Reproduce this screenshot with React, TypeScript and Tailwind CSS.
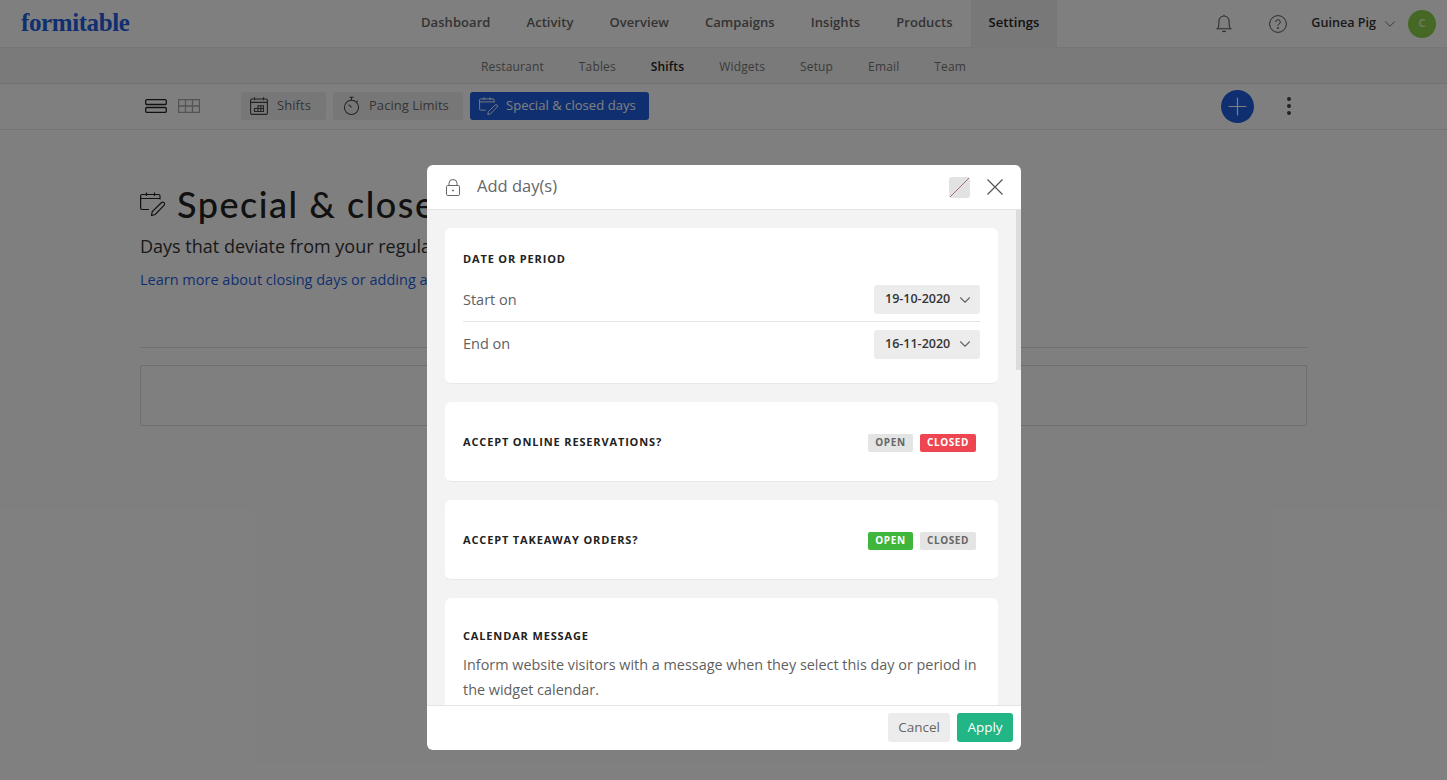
import React from 'react';
import { ChevronDown, Plus } from 'lucide-react';

const sans = { fontFamily: '"Open Sans", sans-serif' };

const mainNav = ['Dashboard', 'Activity', 'Overview', 'Campaigns', 'Insights', 'Products', 'Settings'];
const subNav = ['Restaurant', 'Tables', 'Shifts', 'Widgets', 'Setup', 'Email', 'Team'];

const CalendarPen = ({ className = '' }: { className?: string }) => (
  <svg viewBox="0 0 25 24" fill="none" stroke="currentColor" strokeWidth="1.2" className={className}>
    <path d="M9 17.500H2A1.500 1.500 0 0 1 0.600 16V4A1.500 1.500 0 0 1 2 2.500H18.500A1.500 1.500 0 0 1 20 4V7.500" />
    <path d="M0.600 6.500H20M6.500 0.500V4M14.500 0.500V4" />
    <path d="M11.500 23.500L12.300 19.500L21.300 10.700A1.900 1.900 0 0 1 24 13.400L15.200 22.500Z" />
  </svg>
);

const CalendarGrid = ({ className = '' }: { className?: string }) => (
  <svg viewBox="0 0 18 18" fill="none" stroke="currentColor" strokeWidth="1.1" className={className}>
    <rect x="0.600" y="2" width="16.800" height="15.400" rx="1.300" />
    <path d="M0.600 5.400H17.400M4.500 0.300V3.300M13.500 0.300V3.300" />
    <path d="M4.500 14.500V11.500H8V8.700H13.500V14.500ZM4.500 11.500H13.500M8 11.500V14.500M10.800 8.700V14.500" />
  </svg>
);

const Stopwatch = ({ className = '' }: { className?: string }) => (
  <svg viewBox="0 0 18 20" fill="none" stroke="currentColor" strokeWidth="1.1" className={className}>
    <circle cx="9" cy="11.500" r="7.500" />
    <path d="M6.800 0.800H11.200M9 0.800V4M14.500 4.200L15.800 5.500M6 8.500L9 11.500" />
  </svg>
);

const Bell = ({ className = '' }: { className?: string }) => (
  <svg viewBox="0 0 16 20" fill="none" stroke="currentColor" strokeWidth="1.100" className={className}>
    <path d="M1 15.500C2.300 14.300 2.600 13 2.600 10.500V7.500A5.400 5.400 0 0 1 13.400 7.500V10.500C13.400 13 13.700 14.300 15 15.500Z" />
    <path d="M8 2V0.700M6.300 17.800C7 18.800 9 18.800 9.700 17.800" />
  </svg>
);

const Help = ({ className = '' }: { className?: string }) => (
  <svg viewBox="0 0 18 18" fill="none" stroke="currentColor" strokeWidth="1" className={className}>
    <circle cx="9" cy="9" r="8.400" />
    <path d="M6.700 7A2.300 2.300 0 1 1 9.900 9.100C9.300 9.500 9 9.900 9 10.800" />
    <circle cx="9" cy="13" r="0.500" fill="currentColor" />
  </svg>
);

const Lock = ({ className = '' }: { className?: string }) => (
  <svg viewBox="0 0 14 17" fill="none" stroke="currentColor" strokeWidth="1" className={className}>
    <rect x="0.500" y="6.500" width="13" height="10" rx="1.200" />
    <path d="M3 6.500V4.200A4 3.700 0 0 1 11 4.200V6.500" />
    <circle cx="7" cy="11.500" r="0.600" fill="currentColor" />
  </svg>
);

const TabButton = ({ label, active, icon, width }: { label: string; active?: boolean; icon: React.ReactNode; width: string }) => (
  <div className={`flex h-7 items-center rounded-[3px] text-[13px] tracking-[0.05px] ${width} ${active ? 'bg-[#1f5fe0] text-white' : 'bg-[#efefef] text-[#6b6b6b]'}`}>
    <span className="flex w-[36px] shrink-0 justify-center">{icon}</span>
    <span>{label}</span>
  </div>
);

const DateRow = ({ label, value, border }: { label: string; value: string; border?: boolean }) => (
  <div className={`flex h-[44px] items-center justify-between ${border ? 'border-b border-[#e4e4e4]' : ''}`}>
    <span className="text-[14.500px] text-[#5f5f5f]">{label}</span>
    <div className="flex h-[29px] w-[106px] items-center justify-between rounded-[3px] bg-[#ececec] pl-[11px] pr-[6px] text-[12.500px] font-semibold text-[#333]">
      {value}
      <ChevronDown className="h-[18px] w-[18px] text-[#666]" strokeWidth={1.5} />
    </div>
  </div>
);

const Badge = ({ label, color }: { label: string; color?: string }) => (
  <span className={`flex h-[18px] items-center justify-center rounded-[2px] text-[10px] font-bold tracking-[0.6px] ${color ?? 'bg-[#e4e4e4] text-[#666]'}`}>
    {label}
  </span>
);

const ToggleCard = ({ title, open }: { title: string; open: boolean }) => (
  <div className="flex h-[80px] items-center justify-between rounded-[6px] border-b border-[#e8e8e8] bg-white pl-[18px] pr-[22px] pt-[2px]">
    <h3 className="text-[11px] font-bold tracking-[0.85px] text-[#222]">{title}</h3>
    <div className="flex gap-[7px]">
      <div className="w-[45px]"><Badge label="OPEN" color={open ? 'bg-[#3fb53c] text-white' : undefined} /></div>
      <div className="w-[56px]"><Badge label="CLOSED" color={open ? undefined : 'bg-[#ef4550] text-white'} /></div>
    </div>
  </div>
);

export default function App() {
  return (
    <div className="relative h-[780px] w-full overflow-hidden bg-white" style={sans}>
      <header className="flex h-[48px] items-center border-b border-[#ececec] pl-[21px] pr-[11px]">
        <div className="w-[382px] pb-[2px] text-[25px] font-bold leading-none tracking-[-0.4px] text-[#1f5fe0]" style={{ fontFamily: '"Liberation Serif", serif' }}>formitable</div>
        <nav className="flex h-full">
          {mainNav.map((item) => (
            <div key={item} className={`flex h-full items-center px-[18px] pb-[2px] text-[13px] font-semibold tracking-[0.06px] ${item === 'Settings' ? 'bg-[#f0f0f0] text-[#222]' : 'text-[#666]'}`}>
              {item}
            </div>
          ))}
        </nav>
        <div className="ml-auto flex items-center">
          <Bell className="h-[19px] w-[16px] text-[#555]" />
          <Help className="ml-[37px] h-[18px] w-[18px] text-[#555]" />
          <span className="ml-[24px] text-[12.600px] font-semibold text-[#333]">Guinea Pig</span>
          <ChevronDown className="ml-[5px] h-[18px] w-[18px] text-[#666]" strokeWidth={1.2} />
          <div className="ml-[9px] flex h-[28px] w-[28px] items-center justify-center rounded-full bg-[#8bd14a] text-[11px] font-bold text-white/70">C</div>
        </div>
      </header>

      <div className="flex h-[36px] items-center justify-center gap-[35px] border-b border-[#e2e2e2] bg-[#f5f5f5] pt-[2px] text-[12px] tracking-[0.15px] text-[#777]">
        {subNav.map((item) => (
          <span key={item} className={item === 'Shifts' ? 'font-semibold text-[#222]' : ''}>{item}</span>
        ))}
      </div>

      <div className="flex h-[46px] items-center border-b border-[#e8e8e8] pb-[1px] pl-[145px] pr-[156px]">
        <svg viewBox="0 0 22 14" fill="none" stroke="#222" strokeWidth="1.300" className="h-[14px] w-[22px]">
          <rect x="0.700" y="0.700" width="20.600" height="4.800" rx="1" />
          <rect x="0.700" y="8.500" width="20.600" height="4.800" rx="1" />
        </svg>
        <svg viewBox="0 0 22 14" fill="none" stroke="#a8a8a8" strokeWidth="1.300" className="ml-[11px] h-[14px] w-[22px]">
          <rect x="0.600" y="0.600" width="20.800" height="12.800" />
          <path d="M0.600 7H21.400M7.500 0.600V13.400M14.500 0.600V13.400" />
        </svg>
        <div className="ml-[41px] flex gap-[7px]">
          <TabButton label="Shifts" width="w-[85px]" icon={<CalendarGrid className="h-[18px] w-[18px] text-[#444]" />} />
          <TabButton label="Pacing Limits" width="w-[130px]" icon={<Stopwatch className="h-[20px] w-[17px] text-[#444]" />} />
          <TabButton label="Special & closed days" width="w-[179px]" active icon={<CalendarPen className="h-[18px] w-[19px] text-white" />} />
        </div>
        <div className="ml-auto flex h-[33px] w-[33px] items-center justify-center rounded-full bg-[#1f5fe0] text-white">
          <Plus className="h-[29px] w-[29px]" strokeWidth={1} />
        </div>
        <div className="ml-[33px] flex flex-col gap-[3px]">
          <span className="h-1 w-1 rounded-full bg-[#444]" />
          <span className="h-1 w-1 rounded-full bg-[#444]" />
          <span className="h-1 w-1 rounded-full bg-[#444]" />
        </div>
      </div>

      <main className="mx-[140px] pt-[54px]">
        <div className="flex items-center">
          <CalendarPen className="h-[24px] w-[25px] text-[#222]" />
          <h1 className="ml-[12px] text-[36px] font-medium leading-[40px] tracking-[1.500px] text-[#222]" style={{ fontFamily: 'Lato, sans-serif' }}>Special &amp; closed days</h1>
        </div>
        <p className="mt-[10px] text-[18px] leading-[24px] text-[#333]">Days that deviate from your regular schedule</p>
        <a className="mt-[12px] block text-[14.500px] leading-[20px] text-[#1f5fe0]">Learn more about closing days or adding a special day</a>
        <div className="mt-[57px] border-t border-[#e2e2e2]" />
        <div className="mt-[17px] h-[61px] rounded-[2px] border border-[#dcdcdc]" />
      </main>

      <div className="absolute inset-0 bg-black/50" />

      <div className="absolute left-[427px] top-[165px] flex h-[585px] w-[594px] flex-col overflow-hidden rounded-[6px] bg-white">
        <div className="flex h-[45px] shrink-0 items-center border-b border-[#e4e4e4] pl-[19px] pr-[18px]">
          <Lock className="h-[17px] w-[14px] text-[#666]" />
          <h2 className="ml-[17px] pb-[2px] text-[16.500px] text-[#666]">Add day(s)</h2>
          <svg viewBox="0 0 21 21" className="ml-auto h-[21px] w-[21px] rounded-[3px] bg-[#e2e2e2]">
            <line x1="1" y1="20" x2="20" y2="1" stroke="#8a3a4a" strokeWidth="0.700" />
          </svg>
          <svg viewBox="0 0 16 16" fill="none" stroke="#555" strokeWidth="1.200" className="ml-[17px] h-[16px] w-[16px]">
            <path d="M0.500 0.500L15.500 15.500M15.500 0.500L0.500 15.500" />
          </svg>
        </div>

        <div className="relative min-h-0 flex-1 overflow-hidden bg-[#f3f3f3] pl-[18px] pr-[23px] pt-[18px]">
          <div className="flex flex-col gap-[18px]">
            <section className="h-[156px] rounded-[6px] border-b border-[#e8e8e8] bg-white px-[18px] pt-[24px]">
              <h3 className="mb-[12px] text-[11px] font-bold leading-[14px] tracking-[0.85px] text-[#222]">DATE OR PERIOD</h3>
              <DateRow label="Start on" value="19-10-2020" border />
              <DateRow label="End on" value="16-11-2020" />
            </section>
            <ToggleCard title="ACCEPT ONLINE RESERVATIONS?" open={false} />
            <ToggleCard title="ACCEPT TAKEAWAY ORDERS?" open />
            <section className="h-[160px] rounded-[6px] bg-white px-[18px] pt-[31px]">
              <h3 className="text-[11px] font-bold leading-[14px] tracking-[0.85px] text-[#222]">CALENDAR MESSAGE</h3>
              <p className="mt-[9px] text-[14.400px] leading-[25px] text-[#5f5f5f]">Inform website visitors with a message when they select this day or period in the widget calendar.</p>
            </section>
          </div>
          <div className="absolute right-0 top-0 h-[160px] w-[5px] bg-[#dcdcdc]" />
        </div>

        <div className="flex h-[45px] shrink-0 items-center justify-end gap-[7px] border-t border-[#e4e4e4] pb-[2px] pr-[8px]">
          <button className="h-[29px] w-[62px] rounded-[3px] bg-[#ececec] text-[13.500px] text-[#666]">Cancel</button>
          <button className="h-[29px] w-[56px] rounded-[3px] bg-[#22b585] text-[13.500px] text-white">Apply</button>
        </div>
      </div>
    </div>
  );
}
